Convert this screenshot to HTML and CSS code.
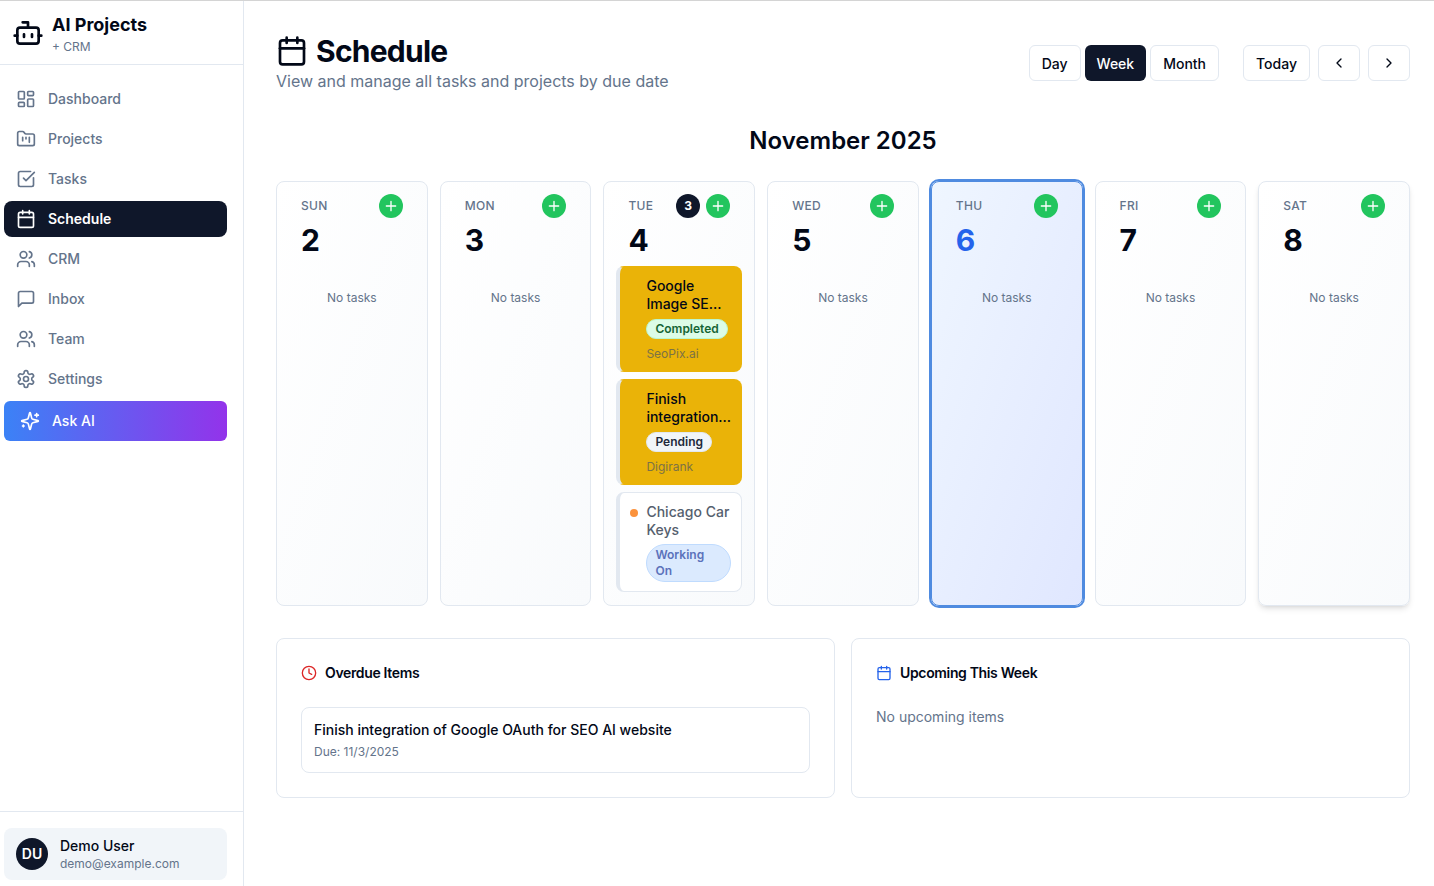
FILE: index.html
```html
<!DOCTYPE html>
<html lang="en">
<head>
  <meta charset="UTF-8">
  <meta name="viewport" content="width=device-width, initial-scale=1.0">
  <title>Schedule</title>
  <link rel="stylesheet" href="styles.css">
</head>
<body>
  <!-- Icon sprite -->
  <svg class="sprite" xmlns="http://www.w3.org/2000/svg">
    <symbol id="i-bot" viewBox="0 0 24 24"><path d="M12 8V4H8"/><rect x="4" y="8" width="16" height="12" rx="2"/><path d="M2 14h2M20 14h2M15 13v2M9 13v2"/></symbol>
    <symbol id="i-dashboard" viewBox="0 0 24 24"><rect x="3" y="3" width="7" height="9" rx="1"/><rect x="14" y="3" width="7" height="5" rx="1"/><rect x="14" y="12" width="7" height="9" rx="1"/><rect x="3" y="16" width="7" height="5" rx="1"/></symbol>
    <symbol id="i-folder" viewBox="0 0 24 24"><path d="M4 20h16a2 2 0 0 0 2-2V8a2 2 0 0 0-2-2h-7.93a2 2 0 0 1-1.66-.9l-.82-1.2A2 2 0 0 0 7.93 3H4a2 2 0 0 0-2 2v13c0 1.1.9 2 2 2Z"/><path d="M8 10v4M12 10v2M16 10v6"/></symbol>
    <symbol id="i-check" viewBox="0 0 24 24"><path d="M21 10.5V19a2 2 0 0 1-2 2H5a2 2 0 0 1-2-2V5a2 2 0 0 1 2-2h12.5"/><path d="m9 11 3 3L22 4"/></symbol>
    <symbol id="i-calendar" viewBox="0 0 24 24"><path d="M8 2v4M16 2v4"/><rect x="3" y="4" width="18" height="18" rx="2"/><path d="M3 10h18"/></symbol>
    <symbol id="i-users" viewBox="0 0 24 24"><path d="M16 21v-2a4 4 0 0 0-4-4H6a4 4 0 0 0-4 4v2"/><circle cx="9" cy="7" r="4"/><path d="M22 21v-2a4 4 0 0 0-3-3.87M16 3.13a4 4 0 0 1 0 7.75"/></symbol>
    <symbol id="i-message" viewBox="0 0 24 24"><path d="M21 15a2 2 0 0 1-2 2H7l-4 4V5a2 2 0 0 1 2-2h14a2 2 0 0 1 2 2z"/></symbol>
    <symbol id="i-settings" viewBox="0 0 24 24"><path d="M12.22 2h-.44a2 2 0 0 0-2 2v.18a2 2 0 0 1-1 1.73l-.43.25a2 2 0 0 1-2 0l-.15-.08a2 2 0 0 0-2.73.73l-.22.38a2 2 0 0 0 .73 2.73l.15.1a2 2 0 0 1 1 1.72v.51a2 2 0 0 1-1 1.74l-.15.09a2 2 0 0 0-.73 2.73l.22.38a2 2 0 0 0 2.73.73l.15-.08a2 2 0 0 1 2 0l.43.25a2 2 0 0 1 1 1.73V20a2 2 0 0 0 2 2h.44a2 2 0 0 0 2-2v-.18a2 2 0 0 1 1-1.73l.43-.25a2 2 0 0 1 2 0l.15.08a2 2 0 0 0 2.73-.73l.22-.39a2 2 0 0 0-.73-2.73l-.15-.08a2 2 0 0 1-1-1.74v-.5a2 2 0 0 1 1-1.74l.15-.09a2 2 0 0 0 .73-2.73l-.22-.38a2 2 0 0 0-2.73-.73l-.15.08a2 2 0 0 1-2 0l-.43-.25a2 2 0 0 1-1-1.73V4a2 2 0 0 0-2-2z"/><circle cx="12" cy="12" r="3"/></symbol>
    <symbol id="i-sparkles" viewBox="0 0 24 24"><path d="M9.937 15.5A2 2 0 0 0 8.5 14.063l-6.135-1.582a.5.5 0 0 1 0-.962L8.5 9.936A2 2 0 0 0 9.937 8.5l1.582-6.135a.5.5 0 0 1 .963 0L14.063 8.5A2 2 0 0 0 15.5 9.937l6.135 1.581a.5.5 0 0 1 0 .964L15.5 14.063a2 2 0 0 0-1.437 1.437l-1.582 6.135a.5.5 0 0 1-.963 0z"/><path d="M20 3v4M22 5h-4M4 17v2M5 18H3"/></symbol>
    <symbol id="i-plus" viewBox="0 0 24 24"><path d="M5 12h14M12 5v14"/></symbol>
    <symbol id="i-left" viewBox="0 0 24 24"><path d="m15 18-6-6 6-6"/></symbol>
    <symbol id="i-right" viewBox="0 0 24 24"><path d="m9 18 6-6-6-6"/></symbol>
    <symbol id="i-clock" viewBox="0 0 24 24"><circle cx="12" cy="12" r="10"/><path d="M12 6v6l4 2"/></symbol>
  </svg>

  <div class="app">
    <!-- Sidebar -->
    <aside class="sidebar">
      <div class="brand">
        <svg class="icon brand-icon"><use href="#i-bot"/></svg>
        <div>
          <div class="brand-name">AI Projects</div>
          <div class="brand-sub">+ CRM</div>
        </div>
      </div>

      <nav class="nav">
        <a class="nav-item"><svg class="icon"><use href="#i-dashboard"/></svg>Dashboard</a>
        <a class="nav-item"><svg class="icon"><use href="#i-folder"/></svg>Projects</a>
        <a class="nav-item"><svg class="icon"><use href="#i-check"/></svg>Tasks</a>
        <a class="nav-item active"><svg class="icon"><use href="#i-calendar"/></svg>Schedule</a>
        <a class="nav-item"><svg class="icon"><use href="#i-users"/></svg>CRM</a>
        <a class="nav-item"><svg class="icon"><use href="#i-message"/></svg>Inbox</a>
        <a class="nav-item"><svg class="icon"><use href="#i-users"/></svg>Team</a>
        <a class="nav-item"><svg class="icon"><use href="#i-settings"/></svg>Settings</a>
        <a class="ask-ai"><svg class="icon"><use href="#i-sparkles"/></svg>Ask AI</a>
      </nav>

      <div class="sidebar-foot">
        <div class="user">
          <div class="avatar">DU</div>
          <div>
            <div class="user-name">Demo User</div>
            <div class="user-mail">demo@example.com</div>
          </div>
        </div>
      </div>
    </aside>

    <!-- Main content -->
    <main class="main">
      <header class="page-head">
        <div>
          <h1 class="page-title"><svg class="icon"><use href="#i-calendar"/></svg>Schedule</h1>
          <p class="page-sub">View and manage all tasks and projects by due date</p>
        </div>
        <div class="toolbar">
          <div class="btn-group">
            <button class="btn">Day</button>
            <button class="btn selected">Week</button>
            <button class="btn">Month</button>
          </div>
          <div class="btn-nav">
            <button class="btn">Today</button>
            <button class="btn btn-icon"><svg class="icon"><use href="#i-left"/></svg></button>
            <button class="btn btn-icon"><svg class="icon"><use href="#i-right"/></svg></button>
          </div>
        </div>
      </header>

      <h2 class="month">November 2025</h2>

      <section class="week">
        <div class="day">
          <div class="day-head"><span class="day-name">SUN</span><span class="add"><svg class="icon"><use href="#i-plus"/></svg></span></div>
          <div class="day-num">2</div>
          <div class="no-tasks">No tasks</div>
        </div>
        <div class="day">
          <div class="day-head"><span class="day-name">MON</span><span class="add"><svg class="icon"><use href="#i-plus"/></svg></span></div>
          <div class="day-num">3</div>
          <div class="no-tasks">No tasks</div>
        </div>
        <div class="day">
          <div class="day-head"><span class="day-name">TUE</span><span class="count">3</span><span class="add"><svg class="icon"><use href="#i-plus"/></svg></span></div>
          <div class="day-num">4</div>
          <div class="tasks">
            <div class="task task-yellow">
              <div class="task-title">Google Image SE...</div>
              <span class="pill pill-green">Completed</span>
              <div class="task-client">SeoPix.ai</div>
            </div>
            <div class="task task-yellow">
              <div class="task-title">Finish integration...</div>
              <span class="pill pill-gray">Pending</span>
              <div class="task-client">Digirank</div>
            </div>
            <div class="task">
              <span class="dot"></span>
              <div class="task-title">Chicago Car Keys</div>
              <span class="pill pill-blue">Working On</span>
            </div>
          </div>
        </div>
        <div class="day">
          <div class="day-head"><span class="day-name">WED</span><span class="add"><svg class="icon"><use href="#i-plus"/></svg></span></div>
          <div class="day-num">5</div>
          <div class="no-tasks">No tasks</div>
        </div>
        <div class="day today">
          <div class="day-head"><span class="day-name">THU</span><span class="add"><svg class="icon"><use href="#i-plus"/></svg></span></div>
          <div class="day-num">6</div>
          <div class="no-tasks">No tasks</div>
        </div>
        <div class="day">
          <div class="day-head"><span class="day-name">FRI</span><span class="add"><svg class="icon"><use href="#i-plus"/></svg></span></div>
          <div class="day-num">7</div>
          <div class="no-tasks">No tasks</div>
        </div>
        <div class="day raised">
          <div class="day-head"><span class="day-name">SAT</span><span class="add"><svg class="icon"><use href="#i-plus"/></svg></span></div>
          <div class="day-num">8</div>
          <div class="no-tasks">No tasks</div>
        </div>
      </section>

      <section class="panels">
        <div class="panel">
          <h3 class="panel-title"><svg class="icon icon-red"><use href="#i-clock"/></svg>Overdue Items</h3>
          <div class="overdue">
            <div class="overdue-title">Finish integration of Google OAuth for SEO AI website</div>
            <div class="overdue-due">Due: 11/3/2025</div>
          </div>
        </div>
        <div class="panel">
          <h3 class="panel-title"><svg class="icon icon-blue"><use href="#i-calendar"/></svg>Upcoming This Week</h3>
          <p class="panel-empty">No upcoming items</p>
        </div>
      </section>
    </main>
  </div>
</body>
</html>
```

FILE: styles.css
```css
* {
  box-sizing: border-box;
}

body {
  margin: 0;
  border-top: 1px solid #d4d4d4;
  background-color: #fff;
  color: #020817;
  font-family: Inter, "Liberation Sans", sans-serif;
  font-size: 14px;
  line-height: 20px;
}

.sprite {
  display: none;
}

.icon {
  width: 20px;
  height: 20px;
  flex: none;
  fill: none;
  stroke: currentColor;
  stroke-width: 2;
  stroke-linecap: round;
  stroke-linejoin: round;
}

.app {
  display: flex;
  height: 885px;
}

/* Sidebar */
.sidebar {
  width: 244px;
  flex: none;
  display: flex;
  flex-direction: column;
  border-right: 1px solid #e2e8f0;
}

.brand {
  height: 64px;
  display: flex;
  align-items: center;
  gap: 8px;
  padding-left: 12px;
  border-bottom: 1px solid #e2e8f0;
  flex: none;
}

.brand-icon {
  width: 32px;
  height: 32px;
}

.brand-name {
  font-size: 18px;
  font-weight: 700;
  line-height: 28px;
}

.brand-sub {
  font-size: 12px;
  line-height: 16px;
  color: #64748b;
}

.nav {
  flex: 1;
  display: flex;
  flex-direction: column;
  gap: 4px;
  padding: 16px 16px 0 4px;
}

.nav-item {
  height: 36px;
  display: flex;
  align-items: center;
  gap: 12px;
  padding-left: 12px;
  border-radius: 8px;
  color: #64748b;
  font-weight: 500;
}

.nav-item.active {
  background-color: #0f172a;
  color: #fff;
  font-weight: 600;
}

.ask-ai {
  height: 40px;
  display: flex;
  align-items: center;
  gap: 12px;
  padding-left: 16px;
  border-radius: 6px;
  background: linear-gradient(to right, #3b82f6, #9333ea);
  color: #fff;
  font-weight: 500;
}

.sidebar-foot {
  height: 75px;
  flex: none;
  padding: 16px 16px 0 4px;
  border-top: 1px solid #e2e8f0;
}

.user {
  height: 52px;
  display: flex;
  align-items: center;
  gap: 12px;
  padding-left: 12px;
  border-radius: 8px;
  background-color: #f1f5f9;
}

.avatar {
  width: 32px;
  height: 32px;
  display: flex;
  align-items: center;
  justify-content: center;
  border-radius: 50%;
  background-color: #0f172a;
  color: #fff;
  font-weight: 600;
}

.user-name {
  font-weight: 500;
  line-height: 20px;
}

.user-mail {
  font-size: 12px;
  line-height: 16px;
  color: #64748b;
}

/* Main */
.main {
  flex: 1;
  min-width: 0;
  padding: 32px 24px 0 32px;
}

.page-head {
  display: flex;
  justify-content: space-between;
  align-items: center;
  height: 60px;
}

.page-title {
  display: flex;
  align-items: center;
  gap: 8px;
  margin: 0;
  font-size: 30px;
  font-weight: 700;
  letter-spacing: -0.025em;
  line-height: 36px;
}

.page-title .icon {
  width: 32px;
  height: 32px;
}

.page-sub {
  margin: 0;
  font-size: 16px;
  line-height: 24px;
  color: #64748b;
}

.toolbar {
  display: flex;
  gap: 24px;
}

.btn-group {
  display: flex;
  gap: 4px;
}

.btn-nav {
  display: flex;
  gap: 8px;
}

.btn {
  height: 36px;
  padding: 0 12px;
  display: flex;
  align-items: center;
  justify-content: center;
  border: 1px solid #e2e8f0;
  border-radius: 6px;
  background-color: #fff;
  color: #020817;
  font-family: inherit;
  font-size: 14px;
  font-weight: 500;
}

.btn.selected {
  background-color: #0f172a;
  border: none;
  color: #fff;
}

.btn-icon {
  width: 42px;
  padding: 0;
}

.btn-icon .icon {
  width: 16px;
  height: 16px;
}

.month {
  margin: 32px 0 24px;
  text-align: center;
  font-size: 24px;
  font-weight: 600;
  line-height: 32px;
}

/* Week grid */
.week {
  display: grid;
  grid-template-columns: repeat(7, 1fr);
  gap: 12px;
}

.day {
  min-width: 0;
  padding: 12px 12px 13px;
  border: 1px solid #e2e8f0;
  border-radius: 8px;
  background: linear-gradient(to bottom right, #fff, #f8fafc);
}

.day.today {
  border-color: #4f8be0;
  box-shadow: 0 0 0 2px #4f8be0;
  background: linear-gradient(to bottom right, #eff6ff, #e0e7ff);
}

.day.today .day-num {
  color: #2563eb;
}

.day.raised {
  box-shadow: 0 4px 6px -1px rgba(0, 0, 0, 0.1), 0 2px 4px -2px rgba(0, 0, 0, 0.1);
}

.day-head {
  display: flex;
  align-items: center;
  gap: 6px;
  padding: 0 12px;
}

.day-name {
  flex: 1;
  font-size: 12px;
  font-weight: 500;
  letter-spacing: 0.3px;
  color: #64748b;
}

.count,
.add {
  width: 24px;
  height: 24px;
  display: flex;
  align-items: center;
  justify-content: center;
  border-radius: 50%;
  color: #fff;
}

.count {
  background-color: #0f172a;
  font-size: 12px;
  font-weight: 700;
}

.add {
  background-color: #22c55e;
}

.add .icon {
  width: 16px;
  height: 16px;
}

.day-num {
  padding: 0 12px;
  margin-top: 4px;
  font-size: 30px;
  font-weight: 700;
  line-height: 36px;
}

.no-tasks {
  margin-top: 32px;
  text-align: center;
  font-size: 12px;
  line-height: 16px;
  color: #64748b;
}

.tasks {
  display: flex;
  flex-direction: column;
  gap: 7.5px;
  margin-top: 8px;
}

.task {
  position: relative;
  padding: 10px 10px 9px 26px;
  border: 1px solid #e2e8f0;
  border-left-width: 4px;
  border-radius: 8px;
  background-color: #fff;
  color: #55606e;
}

.task-yellow {
  padding-bottom: 8.5px;
  border-color: transparent;
  border-left-color: #e2e8f0;
  background-color: #eab308;
  color: #020817;
}

.task-title {
  font-weight: 500;
  line-height: 18px;
}

.dot {
  position: absolute;
  left: 10px;
  top: 16px;
  width: 8px;
  height: 8px;
  border-radius: 50%;
  background-color: #fb923c;
}

.pill {
  display: block;
  width: fit-content;
  margin-top: 6px;
  padding: 1px 8px;
  border: 1px solid transparent;
  border-radius: 999px;
  font-size: 12px;
  font-weight: 600;
  line-height: 16px;
}

.pill-green {
  background-color: #dcfce7;
  border-color: #bbf7d0;
  color: #166534;
}

.pill-gray {
  background-color: #f1f5f9;
  border-color: #e2e8f0;
  color: #1e293b;
}

.pill-blue {
  margin-top: 5px;
  padding: 2px 8px;
  background-color: #dbeafe;
  border-color: #bfdbfe;
  color: #5b72bb;
}

.task-client {
  margin-top: 7px;
  font-size: 12px;
  line-height: 16px;
  color: #7c7245;
}

/* Bottom panels */
.panels {
  display: grid;
  grid-template-columns: 1fr 1fr;
  gap: 16px;
  margin-top: 32px;
}

.panel {
  height: 160px;
  padding: 24px;
  border: 1px solid #e2e8f0;
  border-radius: 8px;
}

.panel-title {
  display: flex;
  align-items: center;
  gap: 8px;
  margin: 0 0 24px;
  font-size: 14px;
  font-weight: 600;
  letter-spacing: -0.025em;
  line-height: 20px;
}

.panel-title .icon {
  width: 16px;
  height: 16px;
}

.icon-red {
  color: #dc2626;
}

.icon-blue {
  color: #2563eb;
}

.overdue {
  height: 66px;
  padding: 12px;
  border: 1px solid #e2e8f0;
  border-radius: 8px;
}

.overdue-title {
  font-weight: 500;
  line-height: 20px;
}

.overdue-due {
  margin-top: 4px;
  font-size: 12px;
  line-height: 16px;
  color: #64748b;
}

.panel-empty {
  margin: 0;
  line-height: 20px;
  color: #64748b;
}
```
